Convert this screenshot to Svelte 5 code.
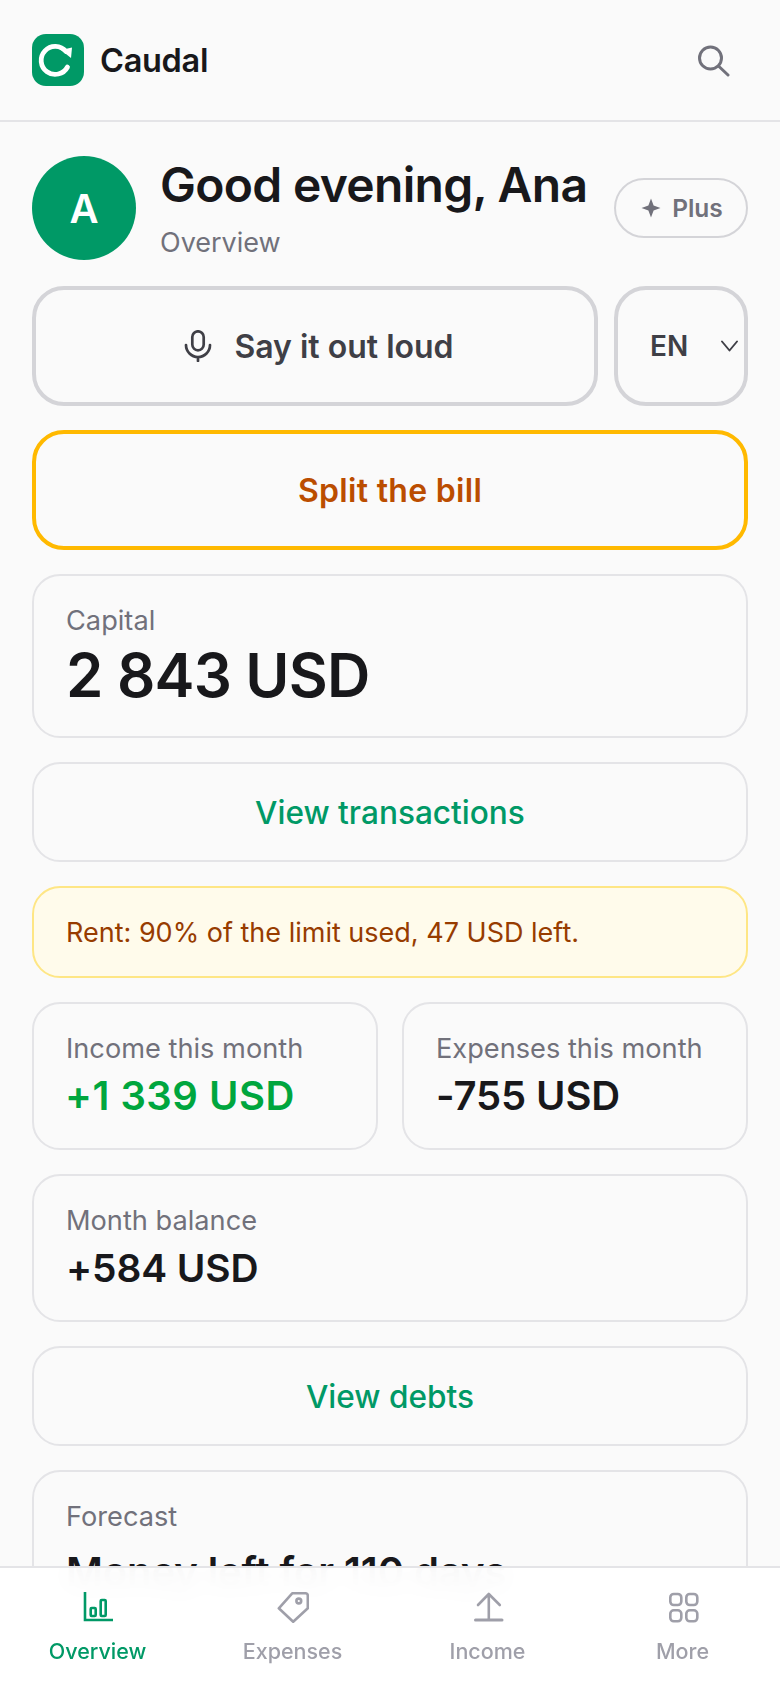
<script lang="ts">
  const navItems = [
    { label: "Overview", active: true },
    { label: "Expenses", active: false },
    { label: "Income", active: false },
    { label: "More", active: false },
  ];
</script>

<div class="shell">
  <header class="topbar">
    <div class="brand">
      <span class="logo" aria-hidden="true">
        <svg viewBox="0 0 52 52" width="52" height="52" fill="none">
          <path d="M34 17.5A14 14 0 1 0 35.5 33" stroke="#fff" stroke-width="4.8" stroke-linecap="round" />
          <path d="M29 16 L40 13.5 L39 24 Z" fill="#fff" />
        </svg>
      </span>
      <span class="brand-name">Caudal</span>
    </div>
    <button class="search" aria-label="Search">
      <svg viewBox="0 0 32 32" width="32" height="32" fill="none" stroke="#71717b" stroke-width="3" stroke-linecap="round">
        <circle cx="12.5" cy="13" r="11" />
        <path d="M21 21.5 L30 30" />
      </svg>
    </button>
  </header>

  <main class="content">
    <section class="greeting">
      <div class="avatar">A</div>
      <div class="greeting-text">
        <h1>Good evening, Ana</h1>
        <p>Overview</p>
      </div>
      <button class="plus">
        <svg viewBox="0 0 20 20" width="20" height="20" fill="#71717b">
          <path d="M10 .5 12.6 7.4 19.5 10 12.6 12.6 10 19.5 7.4 12.6 .5 10 7.4 7.4Z" />
        </svg>
        Plus
      </button>
    </section>

    <div class="voice-row">
      <button class="voice">
        <svg viewBox="0 0 32 32" width="32" height="32" fill="none" stroke="#3f3f46" stroke-width="2.7" stroke-linecap="round">
          <rect x="10.3" y="1.3" width="11.4" height="19" rx="5.7" />
          <path d="M4 15a12 12 0 0 0 24 0M16 27v4" />
        </svg>
        Say it out loud
      </button>
      <button class="lang">
        <span>EN</span>
        <svg viewBox="0 0 17 12" width="17" height="12" fill="none" stroke="#3f3f46" stroke-width="1.9" stroke-linecap="round" stroke-linejoin="round">
          <path d="M1 1.5l7.5 9 7.5-9" />
        </svg>
      </button>
    </div>

    <button class="split">Split the bill</button>

    <section class="card capital">
      <div class="label">Capital</div>
      <div class="big">2 843 USD</div>
    </section>

    <button class="card link">View transactions</button>

    <div class="alert">Rent: 90% of the limit used, 47 USD left.</div>

    <div class="pair">
      <section class="card stat">
        <div class="label">Income this month</div>
        <div class="value green">+1 339 USD</div>
      </section>
      <section class="card stat">
        <div class="label">Expenses this month</div>
        <div class="value">-755 USD</div>
      </section>
    </div>

    <section class="card stat balance">
      <div class="label">Month balance</div>
      <div class="value">+584 USD</div>
    </section>

    <button class="card link">View debts</button>

    <section class="card forecast">
      <div class="label">Forecast</div>
      <div class="value">Money left for 110 days</div>
    </section>
  </main>

  <nav class="tabs">
    {#each navItems as item, i}
      <div class="tab" class:active={item.active}>
        <svg viewBox="0 0 32 32" width="32" height="32" fill="none" stroke="currentColor" stroke-width="2.6" stroke-linecap="round" stroke-linejoin="round">
          {#if i === 0}
            <path d="M3 1v28h28" stroke-linecap="butt" stroke-linejoin="miter" />
            <rect x="8.7" y="17" width="5" height="8" rx="1" />
            <rect x="18.7" y="9" width="5" height="16" rx="1" />
          {:else if i === 1}
            <path d="M15.2 2.3H28.5a2.3 2.3 0 0 1 2.3 2.3V17.3L16.2 30.7 1.8 17.3Z" />
            <circle cx="21.8" cy="10" r="2.4" />
          {:else if i === 2}
            <path d="M16.8 28V3M6 14 16.8 3 27.8 14" />
            <path d="M3.5 29H30" stroke-width="3" />
          {:else}
            <rect x="3.3" y="3" width="11" height="11" rx="3.5" />
            <rect x="19.3" y="3" width="11" height="11" rx="3.5" />
            <rect x="3.3" y="19.3" width="11" height="11" rx="3.5" />
            <rect x="19.3" y="19.3" width="11" height="11" rx="3.5" />
          {/if}
        </svg>
        <span>{item.label}</span>
      </div>
    {/each}
  </nav>
</div>

<style>
  :global(body) {
    margin: 0;
    background: #fafafa;
  }

  .shell {
    height: 1688px;
    display: flex;
    flex-direction: column;
    overflow: hidden;
    background: #fafafa;
    color: #18181b;
    font-family: Inter, "Noto Sans", sans-serif;
  }

  button {
    font: inherit;
    background: none;
    cursor: pointer;
  }

  .topbar {
    flex: none;
    height: 122px;
    box-sizing: border-box;
    display: flex;
    align-items: center;
    justify-content: space-between;
    padding: 0 32px;
    border-bottom: 2px solid #e4e4e7;
  }

  .brand {
    display: flex;
    align-items: center;
    gap: 16px;
  }

  .logo {
    width: 52px;
    height: 52px;
    border-radius: 14px;
    background: #009966;
    display: block;
  }

  .logo svg {
    display: block;
  }

  .brand-name {
    font-size: 32.5px;
    font-weight: 600;
    letter-spacing: -0.3px;
  }

  .search {
    border: 0;
    padding: 0;
    margin: 2px 18px 0 0;
    display: flex;
  }

  .content {
    flex: none;
    display: flex;
    flex-direction: column;
    gap: 24px;
    padding: 34px 32px 0;
  }

  .greeting {
    flex: none;
    display: flex;
    align-items: center;
    gap: 24px;
    height: 104px;
    margin-bottom: 2px;
  }

  .avatar {
    flex: none;
    width: 104px;
    height: 104px;
    border-radius: 50%;
    background: #009966;
    color: #fff;
    display: grid;
    place-items: center;
    font-size: 40px;
    font-weight: 600;
  }

  .greeting-text {
    flex: 1;
    min-width: 0;
  }

  h1 {
    margin: 0;
    font-size: 48px;
    line-height: 60px;
    font-weight: 600;
    letter-spacing: -0.7px;
    white-space: nowrap;
  }

  .greeting-text p {
    margin: 9px 0 0;
    font-size: 27px;
    line-height: 38px;
    color: #71717b;
  }

  .plus {
    flex: none;
    width: 134px;
    height: 60px;
    border: 2px solid #d4d4d8;
    border-radius: 30px;
    color: #71717b;
    font-size: 24.5px;
    font-weight: 600;
    display: flex;
    align-items: center;
    justify-content: center;
    gap: 11px;
    padding: 0 0 0 2px;
  }

  .voice-row {
    flex: none;
    display: flex;
    gap: 16px;
  }

  .voice,
  .lang {
    height: 120px;
    box-sizing: border-box;
    border: 4px solid #d4d4d8;
    border-radius: 32px;
    color: #3f3f46;
    font-size: 32px;
    font-weight: 600;
    display: flex;
    align-items: center;
    padding: 0;
  }

  .voice {
    flex: 1;
    justify-content: center;
    gap: 20px;
    padding-left: 6px;
  }

  .lang {
    flex: none;
    width: 134px;
    font-size: 28px;
    justify-content: space-between;
    padding: 0 6px 0 32px;
  }

  .split {
    flex: none;
    height: 120px;
    box-sizing: border-box;
    border: 4px solid #ffb900;
    border-radius: 32px;
    color: #bb4d00;
    font-size: 32px;
    font-weight: 600;
    letter-spacing: 0.3px;
    padding: 0;
  }

  .card {
    flex: none;
    box-sizing: border-box;
    border: 2px solid #e4e4e7;
    border-radius: 28px;
    padding: 0 32px;
  }

  .label {
    font-size: 27.2px;
    line-height: 36px;
    color: #71717b;
  }

  .capital {
    height: 164px;
    padding-top: 27px;
  }

  .big {
    font-size: 60px;
    line-height: 72px;
    font-weight: 600;
    letter-spacing: -0.8px;
  }

  .link {
    height: 100px;
    width: 100%;
    color: #009966;
    font-size: 31.6px;
    font-weight: 500;
  }

  .alert {
    flex: none;
    box-sizing: border-box;
    height: 92px;
    display: flex;
    align-items: center;
    padding: 0 32px;
    border: 2px solid #fee685;
    border-radius: 28px;
    background: #fffbeb;
    color: #973c00;
    font-size: 27px;
  }

  .pair {
    flex: none;
    display: grid;
    grid-template-columns: 346px 346px;
    justify-content: space-between;
  }

  .stat {
    height: 148px;
    padding-top: 27px;
  }

  .forecast {
    height: 240px;
    padding-top: 27px;
  }

  .value {
    font-size: 40px;
    line-height: 58px;
    font-weight: 600;
    letter-spacing: -0.1px;
    white-space: nowrap;
  }

  .balance .value {
    font-size: 38.9px;
  }

  .forecast .value {
    margin-top: 8px;
  }

  .green {
    color: #00a63e;
    letter-spacing: 0.5px;
    margin-left: -1px;
  }

  /* sits over the scrolled page, the blur is what shows the text underneath */
  .tabs {
    position: fixed;
    left: 0;
    right: 0;
    bottom: 0;
    height: 122px;
    box-sizing: border-box;
    display: grid;
    grid-template-columns: repeat(4, 1fr);
    background: rgba(255, 255, 255, 0.96);
    backdrop-filter: blur(12px);
    border-top: 2px solid #e4e4e7;
    padding-top: 23px;
    color: #9f9fa9;
  }

  .tab {
    display: flex;
    flex-direction: column;
    align-items: center;
    gap: 15px;
    font-size: 21.5px;
    line-height: 26px;
    font-weight: 500;
  }

  .tab.active {
    color: #009966;
  }
</style>
